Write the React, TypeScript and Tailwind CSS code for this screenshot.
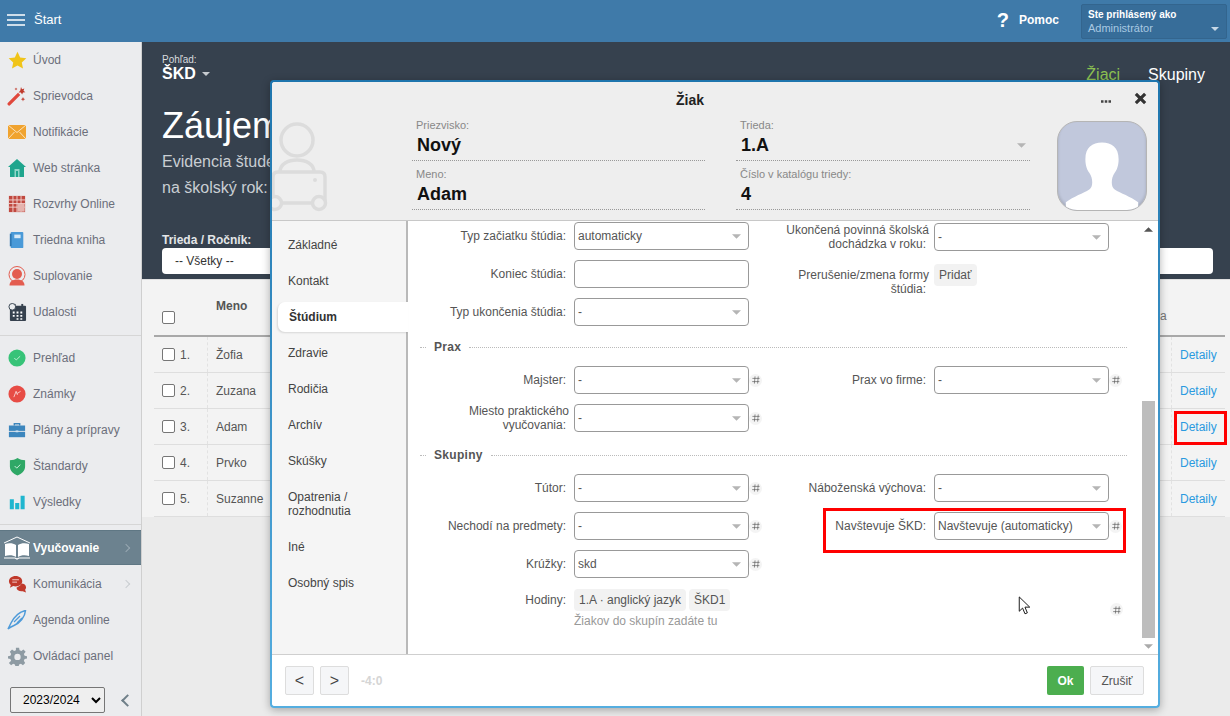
import React from "react";

const font = { fontFamily: '"Liberation Sans", Arial, sans-serif' };

const Star = () => (
  <svg viewBox="0 0 20 20" className="w-[19px] h-[19px]"><path d="M10 .8l2.800 6 6.500.8-4.800 4.400 1.300 6.500L10 15.200 4.200 18.500l1.300-6.500L.7 7.600l6.500-.8z" fill="#f0c419" /></svg>
);
const Wand = () => (
  <svg viewBox="0 0 20 20" className="w-[20px] h-[20px]">
    <path d="M1 16.800L11 6.800l2.300 2.300-10 10a1.600 1.600 0 01-2.300-2.300z" fill="#e0483c" />
    <path d="M14 1l1 2.200 2.300-.7-.8 2.300 1.900 1.400-2.400.2-.9 2.200-1.200-2.100-2.300-.1 1.700-1.800z" fill="#c0392b" />
    <path d="M16 11l.6 1.600 1.600.6-1.600.6-.6 1.600-.6-1.600-1.600-.6 1.600-.6zM9 1.500l.4 1.100 1.100.4-1.100.4L9 4.500l-.4-1.100-1.100-.4 1.100-.4z" fill="#c0392b" />
  </svg>
);
const Mail = () => (
  <svg viewBox="0 0 20 20" className="w-[20px] h-[20px]">
    <rect x="1" y="3" width="18" height="14" fill="#f0a32f" />
    <path d="M1 3l9 7.500L19 3M1 17l6.500-7M19 17l-6.500-7" stroke="#fbe3bd" strokeWidth="1" fill="none" />
  </svg>
);
const House = () => (
  <svg viewBox="0 0 20 20" className="w-[20px] h-[20px]">
    <path d="M10 1l9 8h-2v10H3V9H1z" fill="#1fa58d" />
    <rect x="7.500" y="11" width="5" height="8" fill="#8fd6c8" />
    <rect x="9" y="13" width="2" height="6" fill="#1fa58d" />
  </svg>
);
const Grid = () => (
  <svg viewBox="0 0 20 20" className="w-[18px] h-[18px]">
    <rect x="1" y="1" width="18" height="18" fill="#c0483f" />
    <path d="M1 5.500h18M1 9.500h18M1 13.500h18M5.500 1v18M10 1v18M14.500 1v18" stroke="#f3d6d3" strokeWidth="1" />
    <rect x="10.500" y="10" width="8" height="8.500" fill="#e5b3ae" />
  </svg>
);
const Book = () => (
  <svg viewBox="0 0 20 20" className="w-[18px] h-[18px]">
    <rect x="3" y="1" width="14" height="18" rx="1" fill="#4a9ad8" />
    <rect x="2" y="3" width="2" height="14" fill="#2f78b2" />
    <rect x="7" y="4" width="7" height="4" fill="#d6e9f7" />
  </svg>
);
const Person = () => (
  <svg viewBox="0 0 20 20" className="w-[20px] h-[20px]">
    <circle cx="10" cy="8.500" r="8" fill="none" stroke="#e35d50" strokeWidth="1" />
    <circle cx="10" cy="8" r="5" fill="#e35d50" />
    <path d="M2.500 19.500c0-4 3-6 7.500-6s7.500 2 7.500 6z" fill="#e35d50" />
  </svg>
);
const Cal = () => (
  <svg viewBox="0 0 20 20" className="w-[19px] h-[19px]">
    <rect x="2" y="3" width="17" height="16" rx="1" fill="#36414e" />
    <rect x="6" y="1" width="2" height="4" fill="#36414e" />
    <rect x="14" y="1" width="2" height="4" fill="#36414e" />
    <circle cx="4.500" cy="4" r="3.500" fill="#eceef0" stroke="#36414e" strokeWidth="1" />
    <path d="M5 9h2v2H5zM9 9h2v2H9zM13 9h2v2h-2zM5 12.500h2v2H5zM9 12.500h2v2H9zM13 12.500h2v2h-2zM9 16h2v1.500H9zM13 16h2v1.500h-2z" fill="#fff" />
  </svg>
);
const Check = () => (
  <svg viewBox="0 0 20 20" className="w-[18px] h-[18px]">
    <circle cx="10" cy="10" r="9.500" fill="#37c378" />
    <path d="M7 10l2.200 2.200L13.500 8" stroke="#c9f0da" strokeWidth="1" fill="none" />
  </svg>
);
const Marks = () => (
  <svg viewBox="0 0 20 20" className="w-[18px] h-[18px]">
    <circle cx="10" cy="10" r="9.500" fill="#e74c45" />
    <path d="M6.500 13.500L9 7l1.500 4M10 9.500l4-2.500" stroke="#f9d3d0" strokeWidth="1" fill="none" />
  </svg>
);
const Case = () => (
  <svg viewBox="0 0 20 20" className="w-[18px] h-[18px]">
    <path d="M7 5V3h6v2" fill="none" stroke="#3c86bd" strokeWidth="1.500" />
    <path d="M1 5h18v6H1z" fill="#3c86bd" />
    <path d="M1 12h18v6H1z" fill="#3c86bd" />
    <rect x="8.500" y="10.500" width="3" height="2" fill="#cfe3f2" />
  </svg>
);
const Shield = () => (
  <svg viewBox="0 0 20 20" className="w-[19px] h-[19px]">
    <path d="M10 1c2.500 1.600 5 2.200 8 2.300V10c0 4.500-3.500 7.500-8 9.500C5.500 17.500 2 14.500 2 10V3.300C5 3.200 7.500 2.600 10 1z" fill="#2fa866" />
    <path d="M7 9.500l2.200 2.200L13 8" stroke="#d2f0df" strokeWidth="1" fill="none" />
  </svg>
);
const Bars = () => (
  <svg viewBox="0 0 20 20" className="w-[18px] h-[18px]">
    <path d="M2 7h4.500v11H2zM8 11h4.500v7H8zM14 3h4.500v15H14z" fill="#1fb6cf" />
  </svg>
);
const OpenBook = () => (
  <svg viewBox="0 0 28 26" className="w-[28px] h-[26px]">
    <path d="M1 8l13-6 13 6" fill="none" stroke="#fff" strokeWidth="1" />
    <path d="M2 9c4-1.500 8-1 11 1v12c-3-2-7-2.500-11-1zM26 9c-4-1.500-8-1-11 1v12c3-2 7-2.500 11-1z" fill="#fff" />
    <path d="M1 23h11l2 1 2-1h11" fill="none" stroke="#fff" strokeWidth="1.200" />
  </svg>
);
const Chat = () => (
  <svg viewBox="0 0 20 20" className="w-[19px] h-[19px]">
    <path d="M8 1c4 0 7 2.500 7 5.500S12 12 8 12c-1 0-1.700 0-2.500-.3L2 13.500l1-3C1.700 9.500 1 8 1 6.500 1 3.500 4 1 8 1z" fill="#c0392b" />
    <path d="M14 9c3 0 5 1.500 5 4 0 1-.5 2-1 2.600l1 2.900-3.500-1.500c-3.500.5-6.500-1-6.500-3.500 0-.5 5-2 5-4.500z" fill="#c0392b" />
    <path d="M4.500 5h7M4.500 7.500h5" stroke="#f3d0cc" strokeWidth="1" />
  </svg>
);
const Feather = () => (
  <svg viewBox="0 0 20 20" className="w-[20px] h-[20px]">
    <path d="M1 19l3-6c3-6 8-11 14.500-12.500C18 7 13 13 7 15.500 5 16.300 3.500 17 1 19z" fill="none" stroke="#4f9bd9" strokeWidth="1.500" />
    <path d="M7 12l6-6M10 13l5-5" stroke="#4f9bd9" strokeWidth="1.300" />
  </svg>
);
const Gear = () => (
  <svg viewBox="0 0 24 24" className="w-[19px] h-[19px]">
    <path fill="#8e9ba3" fillRule="evenodd" d="M10 1h4l.6 3 2.300 1 2.600-1.700 2.800 2.800L20 8.700l1 2.300 3 .6v3l-3 .6-1 2.300 1.700 2.600-2.800 2.800-2.600-1.700-2.300 1-.6 2.800h-4l-.6-2.800-2.300-1-2.600 1.700-2.800-2.800L4 17.500l-1-2.300-3-.6v-3l3-.6 1-2.300L2.300 6.100l2.800-2.800L7.700 5 10 4zM12 8.500a4 4 0 100 8 4 4 0 000-8z" />
  </svg>
);

const menuTop = [
  { icon: <Star />, label: "Úvod" },
  { icon: <Wand />, label: "Sprievodca" },
  { icon: <Mail />, label: "Notifikácie" },
  { icon: <House />, label: "Web stránka" },
  { icon: <Grid />, label: "Rozvrhy Online" },
  { icon: <Book />, label: "Triedna kniha" },
  { icon: <Person />, label: "Suplovanie" },
  { icon: <Cal />, label: "Udalosti" },
];
const menuMid = [
  { icon: <Check />, label: "Prehľad" },
  { icon: <Marks />, label: "Známky" },
  { icon: <Case />, label: "Plány a prípravy" },
  { icon: <Shield />, label: "Štandardy" },
  { icon: <Bars />, label: "Výsledky" },
];

const MenuItem = ({ icon, label, arrow }: { icon: React.ReactNode; label: string; arrow?: boolean }) => (
  <div className="h-[36px] flex items-center text-[12px] text-[#6b6f7b]">
    <span className="w-[33px] flex justify-center pl-[1px] shrink-0">{icon}</span>
    <span>{label}</span>
    {arrow && <span className="ml-auto mr-[12px] w-[6px] h-[6px] border-t border-r border-[#c9cdd1] rotate-45" />}
  </div>
);

const Sidebar = () => (
  <aside className="w-[142px] shrink-0 bg-[#ebecee] border-r border-[#cfcfcf] flex flex-col">
    <div className="pb-[5px] border-b border-[#d6d6d6]">
      {menuTop.map((m) => <MenuItem key={m.label} {...m} />)}
    </div>
    <div className="pt-[4px] pb-[4px] border-b border-[#d6d6d6]">
      {menuMid.map((m) => <MenuItem key={m.label} {...m} />)}
    </div>
    <div className="mt-[5px] h-[35px] bg-[#6c828f] flex items-center text-[12px] font-bold text-white border-y border-[#5f7784]">
      <span className="w-[33px] flex justify-center shrink-0"><OpenBook /></span>
      <span>Vyučovanie</span>
      <span className="ml-auto mr-[12px] w-[6px] h-[6px] border-t border-r border-[#98a8b2] rotate-45" />
    </div>
    <div className="pt-[1px]">
      <MenuItem icon={<Chat />} label="Komunikácia" arrow />
      <MenuItem icon={<Feather />} label="Agenda online" />
      <MenuItem icon={<Gear />} label="Ovládací panel" />
    </div>
    <div className="mt-[13px] pl-[10px] flex items-center">
      <select className="w-[95px] h-[26px] border border-[#767676] rounded-[2px] bg-[#efefef] text-[12px] text-black pl-[8px]" defaultValue="2023/2024">
        <option>2023/2024</option>
      </select>
      <span className="ml-[18px] w-[9px] h-[9px] border-l-2 border-b-2 border-[#6f7f88] rotate-45" />
    </div>
  </aside>
);

const names = ["Žofia", "Zuzana", "Adam", "Prvko", "Suzanne"];

const Box = () => <span className="inline-block w-[13px] h-[13px] border border-[#767676] rounded-[2px] bg-white shrink-0" />;

const Main = () => (
  <main className="flex-1 min-w-0 bg-[#ebebeb]">
    <div className="h-[237px] bg-[#36414e] pl-[20px] pr-[17px] pt-[12px] text-white">
      <div className="flex justify-between">
        <div>
          <div className="text-[10px] leading-[11px] text-[#d8dbde]">Pohľad:</div>
          <div className="text-[16px] leading-[18px] font-bold flex items-center gap-[6px]">
            ŠKD <span className="w-0 h-0 border-x-[4px] border-x-transparent border-t-[4px] border-t-[#c7cbd0]" />
          </div>
        </div>
        <div className="flex gap-[28px] text-[16px] pt-[9px] pr-[8px]">
          <span className="text-[#8cc152]">Žiaci</span>
          <span>Skupiny</span>
        </div>
      </div>
      <div className="text-[36px] leading-[42px] mt-[18px]">Záujem</div>
      <div className="text-[16px] leading-[26px] text-[#c9ced3] mt-[2px]">Evidencia študentov</div>
      <div className="text-[16px] leading-[26px] text-[#c9ced3]">na školský rok:</div>
      <div className="text-[12px] leading-[14px] font-bold mt-[32px] text-[#e4e6e8]">Trieda / Ročník:</div>
      <div className="h-[26px] mt-[1px] bg-white rounded-[4px] text-[12px] text-[#333] pl-[13px] flex items-center">-- Všetky --</div>
    </div>
    <div className="bg-[#f3f3f3] h-[238px] pl-[12px] pr-[5px] border-t border-[#dfdfdf]">
      <div className="h-[57px] flex border-b-2 border-[#a8a8a8] text-[12px] font-bold text-[#555]">
        <div className="w-[54px] pl-[8px] pt-[31px]"><span className="block w-[13px] h-[13px] border border-[#767676] rounded-[2px] bg-white" /></div>
        <div className="flex-1 pl-[8px] pt-[17px]">Meno</div>
        <div className="w-[65px] pt-[27px] font-normal text-[#777]">a</div>
      </div>
      {names.map((n, i) => (
        <div key={n} className="h-[36px] flex items-center border-b border-[#dedede] text-[12px] text-[#555]">
          <div className="w-[54px] h-full pl-[8px] flex items-center gap-[5px] border-r border-dashed border-[#e2e2e2]">
            <Box />
            <span>{i + 1}.</span>
          </div>
          <div className="flex-1 pl-[8px]">{n}</div>
          <div className="w-[54px] h-full pl-[8px] flex items-center border-l border-dashed border-[#e2e2e2] text-[#2a9ae0]">Detaily</div>
        </div>
      ))}
    </div>
  </main>
);

const Caret = ({ c = "#b5b5b5" }: { c?: string }) => (
  <svg viewBox="0 0 10 5" className="w-[9px] h-[5px] shrink-0"><path d="M0 0h10L5 5z" fill={c} /></svg>
);

const Hash = () => (
  <span className="w-[13px] h-[13px] rounded-full bg-[#f4f4f4] flex items-center justify-center shrink-0">
    <svg viewBox="0 0 10 10" className="w-[8px] h-[8px]">
      <path d="M3.800 .5L3 9.500M7.800 .5L7 9.500M.5 3h9M.2 7h9" stroke="#555" strokeWidth="0.800" fill="none" />
    </svg>
  </span>
);

const Sel = ({ value, caret = true }: { value?: string; caret?: boolean }) => (
  <div className="w-[175px] h-[28px] shrink-0 border border-[#999] rounded-[4px] bg-white flex items-center pl-[3px] pr-[7px] text-[12px] text-[#555]">
    <span className="flex-1">{value}</span>
    {caret && <Caret />}
  </div>
);

const Row = ({ label, value, hash, caret }: { label: React.ReactNode; value?: string; hash?: boolean; caret?: boolean }) => (
  <div className="w-[360px] flex items-center gap-[8px] h-[28px]">
    <div className="w-[158px] shrink-0 text-right text-[12px] leading-[14px] text-[#555]">{label}</div>
    <div className="flex items-center">
      <Sel value={value} caret={caret} />
      {hash && <Hash />}
    </div>
  </div>
);

const TwoLines = ({ a, b }: { a: string; b: string }) => (
  <>
    <span className="block -mr-[3px] whitespace-nowrap">{a}</span>
    <span className="block whitespace-nowrap">{b}</span>
  </>
);

const Legend = ({ text }: { text: string }) => (
  <div className="ml-[12px] w-[707px] h-[20px] pt-[2px] flex items-center text-[12px] font-bold text-[#555]">
    <span className="w-[6px] border-t border-dotted border-[#bbb]" />
    <span className="px-[8px] tracking-[0.3px]">{text}</span>
    <span className="flex-1 border-t border-dotted border-[#bbb]" />
  </div>
);

const Chip = ({ children }: { children: React.ReactNode }) => (
  <span className="h-[22px] bg-[#f2f2f2] rounded-[4px] px-[5px] flex items-center text-[12px] text-[#555]">{children}</span>
);

const navItems = ["Základné", "Kontakt", "Štúdium", "Zdravie", "Rodičia", "Archív", "Skúšky", "Opatrenia / rozhodnutia", "Iné", "Osobný spis"];

const Field = ({ label, value, caret }: { label: string; value: string; caret?: boolean }) => (
  <div className="h-[49px] border-b border-dotted border-[#999] pl-[4px] pt-[7px]">
    <div className="text-[11px] leading-[12px] text-[#888]">{label}</div>
    <div className="flex items-center pl-[1px] pr-[4px] text-[18px] leading-[28px] font-bold text-[#111]">
      <span className="flex-1">{value}</span>
      {caret && <Caret />}
    </div>
  </div>
);

const Modal = () => (
  <div className="absolute left-[270px] top-[80px] w-[890px] h-[628px] p-[2px] rounded-[4px] bg-gradient-to-b from-[#1e75ad] to-[#55aee0] shadow-[0_2px_8px_rgba(0,0,0,0.3)]">
    <div className="w-full h-full bg-white rounded-[3px] flex flex-col overflow-hidden">
      <div className="relative h-[139px] shrink-0 bg-[#eeeeee] border-b border-[#c8c8c8]">
        <div className="text-center text-[14px] font-bold text-[#222] pt-[10px] leading-[16px] pr-[50px]">Žiak</div>
        <svg viewBox="0 0 16 4" className="absolute right-[47px] top-[18px] w-[10px] h-[3px]"><path d="M0 0h4v4H0zM6 0h4v4H6zM12 0h4v4h-4z" fill="#444" /></svg>
        <svg viewBox="0 0 14 14" className="absolute right-[11px] top-[10px] w-[13px] h-[13px]"><path d="M2 2l10 10M12 2L2 12" stroke="#333" strokeWidth="3.400" /></svg>
        <svg viewBox="0 0 56 92" className="absolute left-0 top-[40px] w-[56px] h-[92px]" fill="none" stroke="#dcdcdc" strokeWidth="3.500">
          <circle cx="25" cy="18" r="16" />
          <path d="M8 50C8 42 16 38 25 38s17 4 17 12" />
          <path d="M1 55q0-5 5-5h42q5 0 5 5v26H1z" />
          <circle cx="43" cy="58" r="2" fill="#dcdcdc" stroke="none" />
          <circle cx="47" cy="81" r="6.500" fill="#eeeeee" />
          <circle cx="3" cy="81" r="6.500" fill="#eeeeee" />
        </svg>
        <div className="absolute left-[140px] top-[30px] w-[293px]">
          <Field label="Priezvisko:" value="Nový" />
          <Field label="Meno:" value="Adam" />
        </div>
        <div className="absolute left-[464px] top-[30px] w-[294px]">
          <Field label="Trieda:" value="1.A" caret />
          <Field label="Číslo v katalógu triedy:" value="4" />
        </div>
        <div className="absolute left-[785px] top-[39px] w-[90px] h-[90px] rounded-[20px] bg-[#c1c8dc] border border-[#b5b5b5] overflow-hidden shadow-[inset_0_-2px_3px_rgba(0,0,0,0.15)]">
          <svg viewBox="0 0 90 90" className="w-full h-full">
            <path d="M45 21c10 0 17 5 17 17 0 7-2 11-4 14-2 3-3 6-3 10 0 3 1 6 3 7 6 4 16 7 24 13v8H8v-8c8-6 18-9 24-13 2-1 3-4 3-7 0-4-1-7-3-10-2-3-4-7-4-14 0-12 7-17 17-17z" fill="#fff" />
          </svg>
        </div>
      </div>
      <div className="flex flex-1 min-h-0">
        <div className="w-[136px] shrink-0 bg-[#f5f5f5] border-r-2 border-[#b9b9b9] pt-[6px] relative">
          {navItems.map((n) => (
            <div key={n} className={n === "Štúdium" ? "h-[30px] my-[3px] ml-[6px] -mr-[2px] pl-[11px] flex items-center bg-white rounded-l-[7px] text-[12px] font-bold text-[#333] relative z-10 shadow-[-1px_1px_2px_rgba(0,0,0,0.12)]" : "px-[16px] py-[11px] text-[12px] leading-[14px] text-[#444]"}>
              {n}
            </div>
          ))}
        </div>
        <div className="flex-1 min-w-0 pt-[1px] overflow-hidden">
          <div className="flex">
            <div className="flex flex-col gap-[10px]">
              <Row label="Typ začiatku štúdia:" value="automaticky" />
              <Row label="Koniec štúdia:" caret={false} />
              <Row label="Typ ukončenia štúdia:" value="-" />
            </div>
            <div className="flex flex-col gap-[10px] pt-[1px]">
              <Row label={<TwoLines a="Ukončená povinná školská" b="dochádzka v roku:" />} value="-" />
              <div className="w-[360px] flex items-start gap-[8px] pt-[6px]">
                <div className="w-[158px] pt-[1px] text-right text-[12px] leading-[14px] text-[#555]"><TwoLines a="Prerušenie/zmena formy" b="štúdia:" /></div>
                <span className="-mt-[3px]"><Chip>Pridať</Chip></span>
              </div>
            </div>
          </div>
          <div className="mt-[10px] mb-[10px]"><Legend text="Prax" /></div>
          <div className="flex">
            <div className="flex flex-col gap-[10px]">
              <Row label="Majster:" value="-" hash />
              <Row label={<TwoLines a="Miesto praktického" b="vyučovania:" />} value="-" hash />
            </div>
            <Row label="Prax vo firme:" value="-" hash />
          </div>
          <div className="mt-[12px] mb-[10px]"><Legend text="Skupiny" /></div>
          <div className="flex">
            <div className="flex flex-col gap-[10px]">
              <Row label="Tútor:" value="-" hash />
              <Row label="Nechodí na predmety:" value="-" hash />
              <Row label="Krúžky:" value="skd" hash />
            </div>
            <div className="flex flex-col gap-[10px]">
              <Row label="Náboženská výchova:" value="-" />
              <Row label="Navštevuje ŠKD:" value="Navštevuje (automaticky)" hash />
            </div>
          </div>
          <div className="flex mt-[11px]">
            <div className="w-[360px] flex gap-[8px]">
              <div className="w-[158px] text-right text-[12px] leading-[22px] text-[#555]">Hodiny:</div>
              <div>
                <div className="flex gap-[3px]"><Chip>1.A · anglický jazyk</Chip><Chip>ŠKD1</Chip></div>
                <div className="text-[12px] leading-[14px] mt-[3px] text-[#999]">Žiakov do skupín zadáte tu</div>
              </div>
            </div>
            <div className="w-[360px] flex justify-end pr-[5px] pt-[14px]"><Hash /></div>
          </div>
        </div>
        <div className="w-[18px] shrink-0 flex flex-col items-center bg-white pr-[3px]">
          <div className="h-[16px] pt-[6px] pl-[1px]"><svg viewBox="0 0 10 5" className="w-[9px] h-[5px]"><path d="M0 5h10L5 0z" fill="#555" /></svg></div>
          <div className="flex-1 w-full flex flex-col justify-end items-end">
            <div className="w-[13px] h-[237px] bg-[#bdbdbd]" />
          </div>
          <div className="h-[16px] pt-[6px] pl-[1px]"><Caret c="#aaa" /></div>
        </div>
      </div>
      <div className="h-[52px] shrink-0 border-t border-[#cfcfcf] flex items-center pl-[13px] pr-[14px] bg-white">
        <span className="w-[29px] h-[29px] border border-[#ddd] rounded-[2px] bg-[#f5f6f8] flex items-center justify-center text-[16px] text-[#444]">&lt;</span>
        <span className="ml-[6px] w-[29px] h-[29px] border border-[#ddd] rounded-[2px] bg-[#f5f6f8] flex items-center justify-center text-[16px] text-[#444]">&gt;</span>
        <span className="ml-[12px] text-[12px] font-bold text-[#d5d5d5]">-4:0</span>
        <span className="ml-auto w-[37px] h-[29px] bg-[#4cae4f] rounded-[2px] flex items-center justify-center text-[12px] font-bold text-white">Ok</span>
        <span className="ml-[6px] w-[54px] h-[29px] border border-[#ddd] rounded-[2px] bg-[#f5f6f8] flex items-center justify-center text-[12px] text-[#555]">Zrušiť</span>
      </div>
    </div>
  </div>
);

export default function App() {
  return (
    <div className="relative w-[1230px] h-[716px] overflow-hidden flex flex-col bg-[#ebebeb]" style={font}>
      <header className="h-[42px] shrink-0 bg-[#3f7aa9] flex items-center text-white pl-[7px] pr-[3px]">
        <svg viewBox="0 0 18 12" className="w-[18px] h-[12px] -mt-[2px]"><path d="M0 1h18M0 6h18M0 11h18" stroke="#fff" strokeWidth="1.600" /></svg>
        <span className="ml-[9px] text-[13px] -mt-[2px]">Štart</span>
        <span className="ml-auto text-[20px] leading-[24px] font-bold -mt-[3px]">?</span>
        <span className="ml-[10px] text-[12px] font-bold -mt-[3px]">Pomoc</span>
        <div className="ml-[22px] w-[146px] h-[35px] bg-[#376d99] rounded-[2px] border border-[#33658e] pl-[6px] relative">
          <div className="text-[10px] leading-[12px] font-bold pt-[4px]">Ste prihlásený ako</div>
          <div className="text-[11px] leading-[14px] text-[#a9c9e2]">Administrátor</div>
          <span className="absolute right-[7px] top-[22px] w-0 h-0 border-x-[4px] border-x-transparent border-t-[4px] border-t-[#c7d8e6]" />
        </div>
      </header>
      <div className="flex flex-1 min-h-0">
        <Sidebar />
        <Main />
      </div>
      <Modal />
      <div className="absolute left-[1174px] top-[411px] w-[53px] h-[34px] border-[3px] border-[#ff0000]" />
      <div className="absolute left-[823px] top-[508px] w-[303px] h-[45px] border-[3px] border-[#ff0000]" />
      <svg viewBox="0 0 13 21" className="absolute left-[1018px] top-[596px] w-[13px] h-[20px]">
        <path d="M1 1v15l3.500-3.300 2.500 6 2.500-1-2.500-6H12z" fill="#fff" stroke="#111" strokeWidth="1" />
      </svg>
    </div>
  );
}
